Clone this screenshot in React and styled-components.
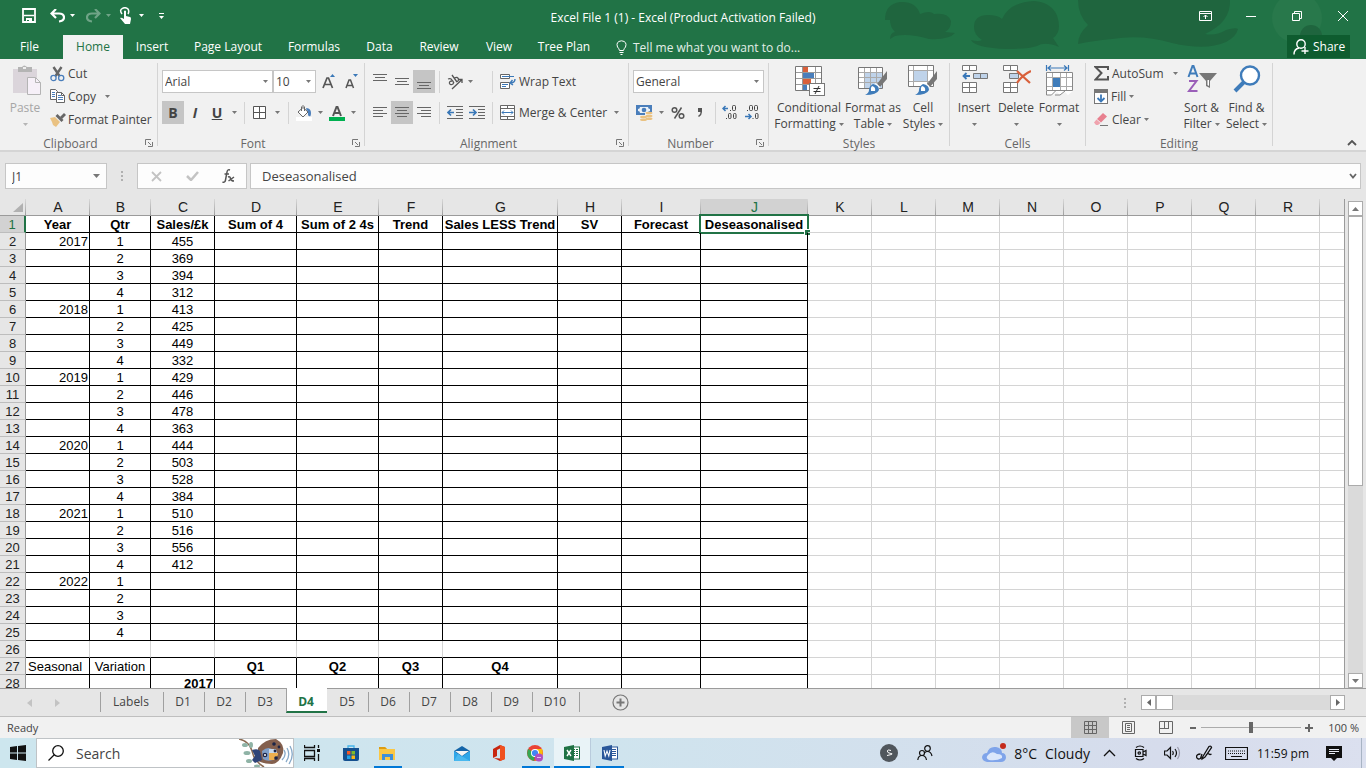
import React from "react";
import styled, { createGlobalStyle, css } from "styled-components";

const UI = `"Open Sans", "Noto Sans", sans-serif`;
const GREEN = "#217346";

const Global = createGlobalStyle`
  *, *::before, *::after { box-sizing: border-box; }
  html, body { margin: 0; padding: 0; }
  body { background: #e6e6e6; overflow: hidden; font-family: ${UI}; font-size: 12px; color: #444; }
  button, input, select { font: inherit; color: inherit; margin: 0; padding: 0; border: 0; background: none; border-radius: 0; }
  svg { display: block; flex: none; }
`;

/* ---------- shell ---------- */
const Shell = styled.div`
  display: flex;
  flex-direction: column;
  height: 100vh;
  min-width: 1280px;
`;

const Banner = styled.header`
  position: relative;
  background: ${GREEN};
  color: #fff;
`;
const Doodle = styled.svg`
  position: absolute;
  top: 0;
  right: 0;
`;
const TitleBar = styled.div`
  position: relative;
  display: grid;
  grid-template-columns: 1fr auto 1fr;
  align-items: center;
  height: 35px;
`;
const QuickBar = styled.div`
  display: flex;
  align-items: center;
  gap: 4px;
  padding: 0 0 4px 21px;
`;
const QuickButton = styled.button`
  display: flex;
  align-items: center;
  gap: 5px;
  height: 24px;
  margin-right: ${(p) => p.$after || 0}px;
  opacity: ${(p) => (p.disabled ? 0.35 : 1)};
`;
const Title = styled.h1`
  margin: 0;
  font-size: 12px;
  line-height: 16px;
  font-weight: 400;
`;
const WindowButtons = styled.div`
  display: flex;
  justify-content: flex-end;
  padding: 0 0 4px;
`;
const WindowButton = styled.button`
  display: flex;
  align-items: center;
  justify-content: center;
  width: 46px;
  height: 30px;
`;
const TabBar = styled.nav`
  position: relative;
  display: flex;
  height: 24px;
`;
const RibbonTab = styled.button`
  width: ${(p) => p.$w}px;
  line-height: 24px;
  text-align: center;
  ${(p) => p.$active && css`background: #f1f1f1; color: ${GREEN};`}
`;
const FileTab = styled(RibbonTab)`
  padding-right: 4px;
`;
const TellMe = styled.button`
  display: flex;
  align-items: center;
  gap: 6px;
  margin-left: 14px;
  color: #e3efe8;
`;
const Share = styled.button`
  display: flex;
  align-items: center;
  gap: 4px;
  height: 23px;
  width: 63px;
  padding-left: 6px;
  margin: 0 16px 0 auto;
  background: #0e5c2f;
`;

/* ---------- ribbon ---------- */
const Ribbon = styled.section`
  display: flex;
  height: 93px;
  background: #f1f1f1;
  border-bottom: 2px solid #d5d5d5;
`;
const Divider = styled.span`
  width: 1px;
  margin: 4px 0;
  background: #d4d4d4;
`;
const Group = styled.section`
  position: relative;
  display: flex;
  flex-direction: column;
  width: ${(p) => p.$w}px;
`;
const GroupBody = styled.div`
  display: flex;
  height: 76px;
  flex: none;
  padding: 3px 0 0 ${(p) => p.$left}px;
`;
const GroupName = styled.h2`
  margin: 0;
  padding-right: ${(p) => (p.$launcher ? 16 : 0)}px;
  font-size: 12px;
  font-weight: 400;
  line-height: 17px;
  text-align: center;
  color: #666;
`;
const Launcher = styled.button`
  position: absolute;
  right: 4px;
  bottom: 3px;
`;
const Rows = styled.div`
  display: flex;
  flex-direction: column;
  gap: ${(p) => p.$gap || 0}px;
  padding-top: ${(p) => p.$top || 0}px;
`;
const Row = styled.div`
  display: flex;
  height: 23px;
  align-items: center;
`;
const SmallButton = styled.button`
  display: flex;
  align-items: center;
  height: 23px;
  gap: ${(p) => p.$gap || 4}px;
  white-space: nowrap;
`;
const IconButton = styled.button`
  display: flex;
  align-items: center;
  justify-content: center;
  width: ${(p) => p.$w || 22}px;
  height: 23px;
  font-size: 14px;
  font-weight: 700;
  background: ${(p) => (p.$on ? "#c5c5c5" : "transparent")};
`;
const CaretButton = styled(IconButton)``;
const RowRule = styled.span`
  width: 1px;
  height: ${(p) => p.$h || 22}px;
  margin: 0 ${(p) => p.$r}px 0 ${(p) => p.$l}px;
  background: #d4d4d4;
`;
const BigButton = styled.button`
  display: flex;
  flex-direction: column;
  align-items: center;
  width: ${(p) => p.$w}px;
  padding-top: 3px;
  line-height: 16px;
  white-space: nowrap;
  color: ${(p) => (p.disabled ? "#a6a6a6" : "#444")};
`;
const BigIcon = styled.span`
  display: flex;
  height: 35px;
  align-items: flex-start;
`;
const BigLine = styled.span`
  display: flex;
  align-items: center;
  gap: 3px;
  height: 16px;
`;
const Picker = styled.span`
  position: relative;
  display: flex;
  align-items: center;
  width: ${(p) => p.$w}px;
  height: 23px;
  margin-right: ${(p) => p.$r || 0}px;
  background: #fff;
  border: 1px solid #c6c6c6;
  select {
    appearance: none;
    width: 100%;
    height: 21px;
    padding: 0 16px 0 2px;
  }
  svg {
    position: absolute;
    right: 4px;
    pointer-events: none;
  }
`;
const Collapse = styled.button`
  margin: auto 9px 4px auto;
`;

/* ---------- formula bar ---------- */
const FormulaRow = styled.section`
  display: flex;
  height: 47px;
  padding: 11px 5px 10px;
`;
const NameBox = styled.div`
  display: flex;
  align-items: center;
  justify-content: space-between;
  width: 102px;
  padding: 0 6px 0 6px;
  background: #fdfdfd;
  border: 1px solid #c6c6c6;
  input { width: 60px; }
`;
const FormulaDots = styled.span`
  display: flex;
  align-items: center;
  justify-content: center;
  width: 30px;
`;
const FormulaTools = styled.div`
  display: flex;
  align-items: center;
  width: 110px;
  margin-right: 3px;
  background: #fdfdfd;
  border: 1px solid #c6c6c6;
  button { display: flex; justify-content: center; width: 36px; }
`;
const FormulaField = styled.div`
  display: flex;
  flex: 1;
  align-items: center;
  padding: 0 3px 0 11px;
  background: #fdfdfd;
  border: 1px solid #c6c6c6;
  input { flex: 1; font-size: 13px; }
`;

/* ---------- sheet ---------- */
const SheetArea = styled.main`
  display: flex;
  flex: 1;
  min-height: 0;
  border-bottom: 1px solid #9b9b9b;
`;
const SheetPane = styled.div`
  flex: 1;
  min-width: 0;
  overflow: hidden;
  background: #fff;
  border-right: 1px solid #9b9b9b;
`;
const Grid = styled.table`
  width: 100%;
  table-layout: fixed;
  border-collapse: separate;
  border-spacing: 0;
  font-family: "Liberation Sans", Arial, sans-serif;
  font-size: 13px;
  color: #000;
`;
const ColumnHead = styled.th`
  height: 17px;
  padding: 0;
  font-size: 14px;
  font-weight: 400;
  line-height: 16px;
  color: ${(p) => (p.$on ? GREEN : "#222")};
  background:
    linear-gradient(#d8d8d8, #a0a0a0) right / 1px 100% no-repeat,
    ${(p) => (p.$on ? "#d2d2d2" : "#e6e6e6")};
  border-bottom: 1px solid ${(p) => (p.$on ? GREEN : "#9b9b9b")};
  &:last-child { background: #e6e6e6; }
  svg { margin: 0 3px 0 auto; }
`;
const RowHead = styled.th`
  height: 17px;
  padding: 2px 0 0;
  font-size: 13px;
  font-weight: 400;
  line-height: 14px;
  color: ${(p) => (p.$on ? GREEN : "#222")};
  background: ${(p) => (p.$on ? "#d2d2d2" : "#e6e6e6")};
  border-right: ${(p) => (p.$on ? `2px solid ${GREEN}` : "1px solid #9b9b9b")};
  border-bottom: 1px solid #bdbdbd;
`;
const Cell = styled.td`
  position: relative;
  height: 17px;
  padding: 2px ${(p) => (p.$align === "right" ? 1 : 0)}px 0 ${(p) => (p.$align === "left" ? 2 : 0)}px;
  line-height: 14px;
  white-space: nowrap;
  text-align: ${(p) => p.$align || "center"};
  font-weight: ${(p) => (p.$bold ? 700 : 400)};
  border-right: 1px solid ${(p) => (p.$right ? "#000" : "#d4d4d4")};
  border-bottom: 1px solid ${(p) => (p.$bottom ? "#000" : "#d4d4d4")};
  &:last-child { border-right: 0; }
`;
const Selection = styled.span`
  position: absolute;
  inset: -2px -2px -2px -2px;
  border: 2px solid ${GREEN};
  &::after {
    content: "";
    position: absolute;
    right: -3px;
    bottom: -3px;
    width: 5px;
    height: 5px;
    background: ${GREEN};
    box-shadow: -1px -1px 0 #fff;
  }
`;
const VScroll = styled.div`
  display: flex;
  flex-direction: column;
  width: 21px;
  padding: 2px 3px 0;
`;
const HScroll = styled.div`
  display: flex;
  width: 204px;
  height: 15px;
  margin: 0 21px 0 0;
`;
const Track = styled.div`
  display: flex;
  flex: 1;
  background: #dadada;
`;
const ScrollButton = styled.button`
  display: flex;
  align-items: center;
  justify-content: center;
  width: 15px;
  height: 15px;
  background: #fff;
  border: 1px solid #ababab;
`;
const Thumb = styled.div`
  width: ${(p) => p.$w};
  height: ${(p) => p.$h};
  background: #fff;
  border: 1px solid #ababab;
`;

const SheetTabs = styled.nav`
  display: flex;
  align-items: center;
  height: 28px;
  border-bottom: 1px solid #bfbfbf;
`;
const TabArrows = styled.div`
  display: flex;
  gap: 23px;
  width: 100px;
  padding-left: 27px;
`;
const TabList = styled.div`
  display: flex;
  align-items: flex-start;
  align-self: flex-start;
  margin-top: -1px;
`;
const SheetTab = styled.button`
  width: ${(p) => p.$w}px;
  height: 20px;
  margin-top: 4px;
  padding-right: 2px;
  line-height: 20px;
  text-align: center;
  border-left: 1px solid #a0a0a0;
  ${(p) => p.$on && css`
    height: 25px;
    margin-top: 0;
    padding-top: 4px;
    font-weight: 700;
    color: ${GREEN};
    background: #fff;
    border-bottom: 2px solid ${GREEN};
  `}
  ${(p) => p.$plain && css`border-left-color: transparent;`}
  ${(p) => p.$last && css`border-right: 1px solid #a0a0a0;`}
`;
const AddSheet = styled.button`
  margin-left: 32px;
`;
const Dots = styled.span`
  margin: 0 15px 0 auto;
`;

/* ---------- status bar ---------- */
const StatusBar = styled.footer`
  display: flex;
  align-items: center;
  height: 21px;
  padding: 0 7px;
  font-size: 11px;
  background: #f1f1f1;
`;
const ViewButton = styled.button`
  display: flex;
  align-items: center;
  justify-content: center;
  width: 38px;
  height: 21px;
  background: ${(p) => (p.$on ? "#c8c8c8" : "transparent")};
`;
const Views = styled.div`
  display: flex;
  margin-left: auto;
`;
const ZoomButton = styled.button`
  display: flex;
  justify-content: center;
  width: 16px;
`;
const ZoomRange = styled.input`
  appearance: none;
  width: 100px;
  height: 12px;
  background: linear-gradient(#ababab, #ababab) center / 100% 1px no-repeat;
  &::-webkit-slider-thumb {
    appearance: none;
    width: 4px;
    height: 11px;
    background: #666;
  }
`;
const ZoomText = styled.span`
  width: 42px;
  text-align: right;
`;

/* ---------- taskbar ---------- */
const Taskbar = styled.footer`
  display: flex;
  align-items: center;
  height: 30px;
  color: #111;
  background: linear-gradient(90deg, #cde6ee, #cfe4ee 45%, #d6dcec 85%, #dbe0ef);
`;
const TaskButton = styled.button`
  position: relative;
  display: flex;
  align-items: center;
  justify-content: center;
  width: ${(p) => p.$w || 37}px;
  height: 30px;
  background: ${(p) => (p.$on ? "#e9f3f7" : "transparent")};
  border-right: ${(p) => (p.$on ? "1px solid #b9cbdc" : "0")};
  ${(p) => p.$open && css`
    &::after {
      content: "";
      position: absolute;
      left: ${p.$on ? 0 : 5}px;
      right: ${p.$on ? 0 : 4}px;
      bottom: 0;
      height: 2px;
      background: #0078d7;
    }
  `}
`;
const TaskSearch = styled.label`
  display: flex;
  align-items: center;
  width: 258px;
  height: 30px;
  padding-left: 11px;
  background: #fff;
  border: 1px solid #bfc3c6;
  input {
    flex: 1;
    min-width: 0;
    padding-left: 12px;
    font-size: 14px;
    &::placeholder { color: #444; opacity: 1; }
  }
`;
const TaskApps = styled.div`
  display: flex;
  margin-left: ${(p) => p.$l || 0}px;
`;
const Tray = styled.div`
  display: flex;
  align-items: center;
  margin-left: auto;
`;
const TrayButton = styled.button`
  display: flex;
  align-items: center;
  justify-content: center;
  width: ${(p) => p.$w}px;
  height: 30px;
  white-space: nowrap;
`;
const WeatherButton = styled(TrayButton)`
  justify-content: flex-end;
  gap: 6px;
  padding-right: 7px;
  font-size: 14px;
`;
const Weather = styled.span`
  display: flex;
  gap: 8px;
`;
const Peek = styled.span`
  width: 5px;
  height: 30px;
  margin-left: 10px;
  border-left: 1px solid #a8b4c4;
`;

/* ---------- icons ---------- */
const Caret = ({ color = "#777" }) => (
  <svg width="5" height="3" viewBox="0 0 5 3"><path d="M0 0h5L2.500 3z" fill={color} /></svg>
);
const Svg = ({ w = 16, h = 16, children, ...rest }) => (
  <svg width={w} height={h} viewBox={`0 0 ${w} ${h}`} fill="none" aria-hidden="true" {...rest}>{children}</svg>
);
const LaunchIcon = () => (
  <Svg w={8} h={8} stroke="#777"><path d="M.5 6V.5H6M3 3l3 3M7.500 3v4.500H3" /></Svg>
);
const Lines = ({ rows }) => (
  <Svg w={14} h={15} stroke="#666">
    {rows.map(([x1, x2, y]) => <path key={y} d={`M${x1} ${y}.5H${x2}`} />)}
  </Svg>
);
const PasteIcon = () => (
  <Svg w={34} h={31}>
    <g transform="translate(4 0)">
      <rect x="1" y="4" width="24" height="24" fill="#dbd5db" />
      <path d="M6 2h4q2-3 5 0h5v5H6z" fill="#b4b4b4" /><rect x="11" y="2" width="3" height="2" fill="#eee" />
      <path d="M15.500 12.500h8l5 5v12h-13z" fill="#f6f0f8" stroke="#b4b4b4" /><path d="M23.500 12.500v5h5" stroke="#b4b4b4" />
    </g>
  </Svg>
);
const CutIcon = () => (
  <Svg w={15} h={16}>
    <path d="M3.500 1l6 9M11.500 1l-6 9" stroke="#666" strokeWidth="2.400" />
    <circle cx="3.500" cy="12" r="2.600" stroke="#4a7ebb" strokeWidth="1.300" /><circle cx="11.200" cy="12" r="2.600" stroke="#4a7ebb" strokeWidth="1.300" />
  </Svg>
);
const CopyIcon = () => (
  <Svg w={15} h={15}>
    <path d="M.5.500h5l2 2v8h-7z" fill="#fff" stroke="#666" /><path d="M2 3.500h3M2 5.500h3M2 7.500h3" stroke="#4a7ebb" />
    <path d="M6.500 3.500h5l3 3v7h-8z" fill="#fff" stroke="#666" /><path d="M8 6.500h3M8 8.500h5M8 10.500h5" stroke="#4a7ebb" />
    <path d="M11.500 3.500v3h3" stroke="#666" />
  </Svg>
);
const PainterIcon = () => (
  <Svg w={16} h={14}>
    <path d="M0 5l5-1 5 5-4 5-3-2-1-3z" fill="#eac282" />
    <path d="M5.500 3l2-2 6 6-2 2z" fill="#666" /><path d="M10 4l4-4 2 2-4 4z" fill="#666" />
  </Svg>
);
const FontSizeIcon = ({ up }) => (
  <Svg w={14} h={16}>
    {up
      ? <><path d="M1 14L5 4h1.500l4 10M2.500 10.500h6.500" stroke="#555" strokeWidth="1.700" /><path d="M8 3h5L10.500 0z" fill="#3a78b8" /></>
      : <><path d="M1 14l3-8h1.500l3 8M2 11.500h5" stroke="#555" strokeWidth="1.500" /><path d="M8 0h5l-2.500 3z" fill="#3a78b8" /></>}
  </Svg>
);
const BorderIcon = () => (
  <Svg w={13} h={13}><path d="M.5.500h12v12H.5zM6.500 0v13M0 6.500h13" stroke="#555" fill="#fff" /></Svg>
);
const FillIcon = () => (
  <Svg w={16} h={16}>
    <path d="M10.500 3q6 1 4 8-1.500 1-2.500-1 .5-4-2-6z" fill="#4a7ebb" />
    <rect x="0" y="12" width="16" height="4" fill="#fff" />
    <path d="M2 7l5-4.500L12 7l-5 5z" fill="#fff" stroke="#666" /><path d="M5.500 6V2q1.500-3 3 0v4" stroke="#666" />
  </Svg>
);
const FontColorIcon = () => (
  <Svg w={16} h={16}>
    <path d="M4 11L7.500 2h1l3.500 9M5.500 8h5" stroke="#555" strokeWidth="2" /><rect x="0" y="12" width="16" height="4" fill="#00b050" />
  </Svg>
);
const OrientIcon = () => (
  <Svg w={16} h={16} stroke="#555" strokeWidth="1.300">
    <path d="M1 5q3-1 4 1l2 3M5 7q-3 0-2.500 2.500 1 2 3.500.5 1-1 0-3M5 1l5 7M7.500 4q3-1.500 4 1 0 3-2.500 2.500" />
    <path d="M5 15L15 5.500M11.500 5.500H15V9" />
  </Svg>
);
const IndentIcon = ({ right }) => (
  <Svg w={16} h={13}>
    <path d="M0 .5h16M9 3.500h7M9 6.500h7M9 9.500h7M0 12.500h16" stroke="#666" />
    <path d={right ? "M0 6.500h6M4 3.500l3 3-3 3" : "M7 6.500H1M4 3.500l-3 3 3 3"} stroke="#3a78b8" strokeWidth="1.700" />
  </Svg>
);
const WrapIcon = () => (
  <Svg w={16} h={15}>
    <path d="M.5.500h9v4h-9zM.5 8.500h9v6h-9z" stroke="#666" fill="#fff" /><path d="M2 2.500h12M2 10.500h6M2 12.500h4" stroke="#3a78b8" />
    <path d="M15 5q0 4-5 4M12.500 6L10 9l3 2" stroke="#3a78b8" strokeWidth="1.400" />
  </Svg>
);
const MergeIcon = () => (
  <Svg w={15} h={15}>
    <path d="M.5.500h14v14H.5zM0 3.500h15M0 11.500h15M7.500 0v3M7.500 12v3" stroke="#666" fill="#fff" />
    <path d="M2 7.500h11M4 5.500l-2 2 2 2M11 5.500l2 2-2 2" stroke="#3a78b8" />
  </Svg>
);
const MoneyIcon = () => (
  <Svg w={17} h={16}>
    <rect x="0" y="0" width="16" height="10" fill="#4a7ebb" />
    <path d="M2 4q2 0 2-2h8q0 2 2 2v2q-2 0-2 2H4q0-2-2-2z" fill="#eaf1f8" />
    <circle cx="8" cy="5" r="2.300" fill="#4a7ebb" />
    <path d="M9 7h8v9H9z" fill="#f1f1f1" />
    <ellipse cx="13" cy="8" rx="3.500" ry="1.300" fill="#eac282" /><ellipse cx="13" cy="11" rx="3.500" ry="1.300" fill="#eac282" />
    <ellipse cx="13" cy="13.800" rx="3.500" ry="1.200" fill="#eac282" /><ellipse cx="7.500" cy="12" rx="3.500" ry="1.200" fill="#eac282" />
    <ellipse cx="7.500" cy="14.700" rx="3.500" ry="1.300" fill="#eac282" />
  </Svg>
);
const DecimalIcon = ({ more }) => (
  <Svg w={16} h={15} stroke="#444">
    {more ? <>
      <path d="M6 3.500H1M3.500 1L1 3.500 3.500 6" stroke="#3a78b8" strokeWidth="1.500" /><path d="M8 5.500h1M4 13.500h1" />
      <rect x="10.500" y=".5" width="3" height="5" rx="1" /><rect x="6.500" y="8.500" width="2.500" height="5" rx="1" /><rect x="11.500" y="8.500" width="2.500" height="5" rx="1" />
    </> : <>
      <path d="M1 11.500h6M4.500 9L7 11.500 4.500 14" stroke="#3a78b8" strokeWidth="1.500" /><path d="M3 5.500h1M8.500 13.500h1" />
      <rect x="5.500" y=".5" width="3" height="5" rx="1" /><rect x="10.500" y=".5" width="3" height="5" rx="1" /><rect x="11.500" y="8.500" width="2.500" height="5" rx="1" />
    </>}
  </Svg>
);
const ConditionalIcon = () => (
  <Svg w={31} h={31}>
    <rect x="1" y="1" width="27" height="24" fill="#fff" />
    <path d="M9 1h5v6H9zM9 14h8v5H9z" fill="#d9603b" /><path d="M9 8h11v5H9zM9 20h4v5H9z" fill="#4a7ebb" />
    <path d="M1 7.500h27M1 13.500h27M1 19.500h27M8.500 1v24M21.500 1v24" stroke="#999" />
    <path d="M1.500 1.500h26v24h-26z" stroke="#777" />
    <rect x="15.500" y="18.500" width="15" height="12" fill="#fff" stroke="#777" />
    <path d="M19.500 23.500h7M19.500 26.500h7M25 21l-4 8" stroke="#333" />
  </Svg>
);
const BrushShape = () => (
  <>
    <path d="M29 6v8l-7 8-3-3z" fill="#777" /><path d="M18 18l4 4-2 3-5-5z" fill="#fff" />
    <path d="M15 19q6 1 6 6-2 5-14 5 4-2 4-5 0-4 4-6z" fill="#3f7cba" /><path d="M14 21q4 1 3 5h-4q-1-3 1-5z" fill="#fff" />
  </>
);
const FormatTableIcon = () => (
  <Svg w={30} h={31}>
    <path d="M.5 2.500h24v21H.5z" fill="#fff" /><path d="M6 8h18v15H6z" fill="#bfd3ea" />
    <path d="M.5 7.500h24M.5 12.500h24M.5 17.500h24M6.500 3v20M12.500 3v20M18.500 3v20" stroke="#aaa" /><path d="M.5 2.500h24v21H.5z" stroke="#777" />
    <BrushShape />
  </Svg>
);
const CellStyleIcon = () => (
  <Svg w={30} h={31}>
    <path d="M.5.500h25v21H.5z" fill="#fff" /><path d="M.5 5.500h25M.5 16.500h25M5.500 0v21M19.500 0v21" stroke="#aaa" />
    <path d="M6 6h13v10H6z" fill="#bfd3ea" /><path d="M.5.500h25v21H.5z" stroke="#777" /><BrushShape />
  </Svg>
);
const InsertIcon = () => (
  <Svg w={28} h={29}>
    <g fill="#fff" stroke="#777"><path d="M2.500.500h14v5h-14zM9.500 0v6M2.500 17.500h14v10h-14zM9.500 17v11M2 22.500h15" /></g>
    <path d="M13.500 8.500h14v5h-14zM20.500 8v6" fill="#bfd3ea" stroke="#777" />
    <path d="M10 11H4M6.500 8L3.500 11l3 3" stroke="#3a78b8" strokeWidth="1.800" />
  </Svg>
);
const DeleteIcon = () => (
  <Svg w={30} h={29}>
    <g fill="#fff" stroke="#777"><path d="M2.500.500h14v5h-14zM9.500 0v6M2.500 17.500h14v10h-14zM9.500 17v11M2 22.500h15" /></g>
    <path d="M8.500 8.500h9v5h-9z" fill="#bfd3ea" stroke="#777" />
    <path d="M16 6l13 12M30 6Q21 10 16 18" stroke="#d9603b" strokeWidth="2.200" />
  </Svg>
);
const FormatIcon = () => (
  <Svg w={29} h={32}>
    <path d="M1.500 0v6M23.500 0v6M3 3h19M6 .5L3 3l3 2.500M19 .500L22 3l-3 2.500" stroke="#3a78b8" strokeWidth="1.200" />
    <path d="M1 7h27v19l-5 4-3-3-5 3-3-3-4 3-7 0z" fill="#fff" />
    <path d="M1 12.500h27M1 21.500h27M7.500 7v19M15.500 7v19M21.500 7v19" stroke="#aaa" /><path d="M8 13h7v9H8z" fill="#3f7cba" />
    <path d="M1.500 7.500h26v18h-26zM1.500 26v4h5l4-4M10 30h5l5-4" stroke="#888" />
  </Svg>
);
const SigmaIcon = () => (
  <Svg w={15} h={15}><path d="M14 4V1H1.500l6 6-6 6.500H14V10" stroke="#555" strokeWidth="2" /></Svg>
);
const FillDownIcon = () => (
  <Svg w={14} h={15}><rect x=".5" y=".5" width="13" height="14" fill="#fff" stroke="#777" /><path d="M0 0h14v4H0z" fill="#777" /><path d="M7 5.500V13M3.500 9L7 12.500 10.500 9" stroke="#3a78b8" strokeWidth="1.800" /></Svg>
);
const ClearIcon = () => (
  <Svg w={15} h={14}><path d="M9 0l4 3.500-6 6L3 6z" fill="#e8808f" /><path d="M2.500 6.500L6.500 10 4 12H2L0 9.500z" fill="#f0a3ae" /><path d="M6 12.500h8" stroke="#777" /></Svg>
);
const SortIcon = () => (
  <Svg w={30} h={28}>
    <path d="M1.500 12L5.500 1h1l4 11M3 8.500h6" stroke="#3f7cba" strokeWidth="2" />
    <path d="M2 16h7.500L2 26h8.500" stroke="#9a5fb8" strokeWidth="2" />
    <path d="M12 8h18l-7 8v7l-4-2v-5z" fill="#777" /><path d="M20.500 15h1.500v6l-1.500-1z" fill="#fff" />
  </Svg>
);
const FindIcon = () => (
  <Svg w={28} h={28}><path d="M11 17L2 26" stroke="#3f7cba" strokeWidth="4" /><circle cx="17" cy="10.500" r="9" fill="#fff" stroke="#3f7cba" strokeWidth="2.400" /></Svg>
);
const BirdArt = () => (
  <Svg w={54} h={28}>
    <path d="M0 0q10 2 13 12 2 10 12 16" stroke="#8a6a52" strokeWidth="1.500" />
    <g fill="#8fb3a6"><ellipse cx="6" cy="6" rx="3" ry="2" /><ellipse cx="12" cy="6" rx="2" ry="3" /><ellipse cx="8" cy="14" rx="3.500" ry="2" /><ellipse cx="10" cy="22" rx="3" ry="2" /><ellipse cx="18" cy="27" rx="3" ry="1.500" /></g>
    <path d="M19 9Q26 0 37 0q9 5 7 14-4 11-11 11-8 0-14-3z" fill="#84604e" />
    <path d="M23 12q7-6 12 0l-1 9q-6 2-10-1z" fill="#7f9fc9" /><path d="M30 14h9v2l-4 5h-5z" fill="#efb04e" /><path d="M30 10h7l1 4h-8z" fill="#c9d9ea" />
    <g fill="#1c2547"><circle cx="35" cy="5" r="1.800" /><circle cx="40" cy="8" r="1.400" /><circle cx="26" cy="16" r="2.300" /><circle cx="36" cy="12" r="1.400" /><circle cx="37" cy="19" r="1.800" /></g>
    <circle cx="26" cy="16" r="1" fill="#fff" />
    <path d="M13 11q6-2 8 1l2 9-7 3-3-3 3-4z" fill="#2f4478" />
    <path d="M45 11q3 5-2 10M48 9q4 7-1 14M51 7q5 9-1 18" stroke="#86a9c9" strokeWidth="1.300" />
  </Svg>
);

/* ---------- data ---------- */
const COLS = [
  ["A", 64], ["B", 61], ["C", 64], ["D", 82], ["E", 82], ["F", 64], ["G", 115], ["H", 64], ["I", 79], ["J", 107],
  ["K", 64], ["L", 64], ["M", 64], ["N", 64], ["O", 64], ["P", 64], ["Q", 64], ["R", 64], ["", null],
];
const HEAD = ["Year", "Qtr", "Sales/£k", "Sum of 4", "Sum of 2 4s", "Trend", "Sales LESS Trend", "SV", "Forecast", "Deseasonalised"];
const SALES = [455, 369, 394, 312, 413, 425, 449, 332, 429, 446, 478, 363, 444, 503, 528, 384, 510, 516, 556, 412];

function cellAt(row, col) {
  if (row === 1) return { text: HEAD[col], bold: true };
  if (row <= 25) {
    const i = row - 2;
    if (col === 0 && i % 4 === 0) return { text: 2017 + i / 4, align: "right" };
    if (col === 1) return { text: (i % 4) + 1 };
    if (col === 2) return { text: SALES[i] };
    return {};
  }
  if (row === 27) {
    if (col === 0) return { text: "Seasonal", align: "left" };
    if (col === 1) return { text: "Variation" };
    if (col >= 3 && col <= 6) return { text: `Q${col - 2}`, bold: true };
  }
  if (row === 28 && col === 2) return { text: "2017", bold: true, align: "right" };
  return {};
}

const RIBBON_TABS = [["Insert", 58], ["Page Layout", 94], ["Formulas", 78], ["Data", 53], ["Review", 66], ["View", 54], ["Tree Plan", 76]];
const SHEETS = [["Labels", 63], ["D1", 41], ["D2", 41], ["D3", 41], ["D4", 41], ["D5", 41], ["D6", 41], ["D7", 41], ["D8", 41], ["D9", 41], ["D10", 48]];

/* ---------- parts ---------- */
function RibbonGroup({ name, w, left, launcher, children }) {
  return (
    <>
      <Group $w={w}>
        <GroupBody $left={left}>{children}</GroupBody>
        <GroupName $launcher={launcher}>{name}</GroupName>
        {launcher && <Launcher aria-label={`${name} settings`}><LaunchIcon /></Launcher>}
      </Group>
      <Divider />
    </>
  );
}

function Big({ w, icon, lines, caretBelow, disabled }) {
  const last = lines.length - 1;
  return (
    <BigButton $w={w} disabled={disabled}>
      <BigIcon>{icon}</BigIcon>
      {lines.map((t, i) => <BigLine key={t}>{t}{i === last && !caretBelow && <Caret />}</BigLine>)}
      {caretBelow && <BigLine><Caret color={disabled ? "#b5b5b5" : "#777"} /></BigLine>}
    </BigButton>
  );
}

function Sheet() {
  return (
    <Grid>
      <colgroup>
        <col style={{ width: 26 }} />
        {COLS.map(([n, w]) => <col key={n} style={w ? { width: w } : undefined} />)}
      </colgroup>
      <thead>
        <tr>
          <ColumnHead aria-label="Select all"><Svg w={10} h={9}><path d="M10 0v9H0z" fill="#b1b1b1" /></Svg></ColumnHead>
          {COLS.map(([n]) => <ColumnHead key={n} scope="col" $on={n === "J"}>{n}</ColumnHead>)}
        </tr>
      </thead>
      <tbody>
        {Array.from({ length: 28 }, (_, i) => i + 1).map((r) => (
          <tr key={r}>
            <RowHead scope="row" $on={r === 1}>{r}</RowHead>
            {COLS.map(([n], c) => {
              const { text, bold, align } = cellAt(r, c);
              return (
                <Cell key={n} $bold={bold} $align={align} $right={c < 10 && !(r === 26 && c < 6)} $bottom={c < 10}>
                  {text}
                  {r === 1 && n === "J" && <Selection />}
                </Cell>
              );
            })}
          </tr>
        ))}
      </tbody>
    </Grid>
  );
}

export default function App() {
  return (
    <Shell>
      <Global />
      <Banner>
        <Doodle width="526" height="59" viewBox="0 0 526 59" aria-hidden="true">
          <circle cx="457" cy="18" r="25" fill="#28784b" />
          <g fill="#1f653e">
            <path d="M45 20Q45 4 60 2q16-1 20 12 10-4 14 0 14-2 17 7 0 8-6 11l10 1q-6 7-26 6-20-6-34-3l-5 3q0-6 5-7-5-5-5-12z" />
            <path d="M134 27q0-12 14-12 10 0 14 4Q170 2 194 1q24 2 25 25 0 8-6 12l6 9q-14-6-22-1-8 3-30 3-32-1-36-9 8 2 11 0-8-5-8-13z" />
            <path d="M238 0h152q1 22-25 34 11 2 21-4 10-3 12-1-2 8-12 13-20 9-54 1-30-9-60-4-20 2-34 5 0-10 10-19-10-10-10-25z" />
            <circle cx="471" cy="36" r="11" />
          </g>
        </Doodle>
        <TitleBar>
          <QuickBar>
            <QuickButton aria-label="Save" $after={9}>
              <Svg w={16} h={15}><path d="M2 1h12v13H2z" stroke="#fff" strokeWidth="1.800" /><path d="M3 7.500h10" stroke="#fff" strokeWidth="1.500" /><path d="M5 10h6v4H8v-2H6v2H5z" fill="#fff" /></Svg>
            </QuickButton>
            <QuickButton aria-label="Undo" $after={7}>
              <Svg w={15} h={14}><path d="M6 0L1.500 4.500 6 9M2 4.500h7q5 0 5 4 0 3.500-5 4" stroke="#fff" strokeWidth="2.200" /></Svg><Caret color="#fff" />
            </QuickButton>
            <QuickButton aria-label="Redo" disabled $after={4}>
              <Svg w={15} h={14}><path d="M9 0l4.500 4.500L9 9M13 4.500H6q-5 0-5 4 0 3.500 5 4" stroke="#fff" strokeWidth="2.200" /></Svg><Caret color="#fff" />
            </QuickButton>
            <QuickButton aria-label="Touch mode" $after={11}>
              <Svg w={15} h={17}><path d="M3 7Q0 3 3.500 1.300q3-1.500 5.500.7 1.500 2.500 0 5" stroke="#fff" strokeWidth="1.500" /><path d="M5 4q1-1 2 0v5l4 1q1 0 1 2l-1 5H6l-5-6q1-1 4 1z" fill="#fff" /></Svg><Caret color="#fff" />
            </QuickButton>
            <QuickButton aria-label="Customize toolbar">
              <Svg w={5} h={6}><path d="M0 .5h5" stroke="#fff" /><path d="M0 3h5L2.500 6z" fill="#fff" /></Svg>
            </QuickButton>
          </QuickBar>
          <Title>Excel File 1 (1) - Excel (Product Activation Failed)</Title>
          <WindowButtons>
            <WindowButton aria-label="Ribbon options"><Svg w={13} h={10} stroke="#fff"><path d="M.5.500h12v9H.5zM0 2.500h13M6.500 8V4M4.500 6l2-2 2 2" /></Svg></WindowButton>
            <WindowButton aria-label="Minimize"><Svg w={10} h={10} stroke="#fff"><path d="M0 5.500h10" /></Svg></WindowButton>
            <WindowButton aria-label="Restore"><Svg w={10} h={10} stroke="#fff"><path d="M.5 2.500h7v7h-7zM2.500 2V.500h7v7H8" /></Svg></WindowButton>
            <WindowButton aria-label="Close"><Svg w={10} h={10} stroke="#fff"><path d="M0 0l10 10M10 0L0 10" /></Svg></WindowButton>
          </WindowButtons>
        </TitleBar>
        <TabBar>
          <FileTab $w={63}>File</FileTab>
          <RibbonTab $w={60} $active>Home</RibbonTab>
          {RIBBON_TABS.map(([t, w]) => <RibbonTab key={t} $w={w}>{t}</RibbonTab>)}
          <TellMe>
            <Svg w={11} h={15} stroke="#fff"><path d="M3.500 10.500Q3 8.500 1.500 7-.5 1.500 5.500.800q6 .7 4 6.200-1.500 1.500-2 3.500zM3.500 12.500h4M4.500 14.500h2" /></Svg>
            Tell me what you want to do...
          </TellMe>
          <Share>
            <Svg w={16} h={16} stroke="#fff" strokeWidth="1.400"><circle cx="8" cy="5" r="4.200" /><path d="M1 15.500Q1 10 6 9M12 8v7M8.500 12h7" /></Svg>
            Share
          </Share>
        </TabBar>
      </Banner>

      <Ribbon>
        <RibbonGroup name="Clipboard" w={157} left={0} launcher>
          <Big w={50} icon={<PasteIcon />} lines={["Paste"]} caretBelow disabled />
          <Rows>
            <SmallButton $gap={3}><CutIcon />Cut</SmallButton>
            <SmallButton $gap={3}><CopyIcon />Copy<Svg w={3} h={3} /><Caret /></SmallButton>
            <SmallButton $gap={2}><PainterIcon />Format Painter</SmallButton>
          </Rows>
        </RibbonGroup>

        <RibbonGroup name="Font" w={206} left={4} launcher>
          <Rows $top={8} $gap={8}>
            <Row>
              <Picker $w={111}><select aria-label="Font" defaultValue="Arial"><option>Arial</option></select><Caret /></Picker>
              <Picker $w={43} $r={1}><select aria-label="Font size" defaultValue="10"><option>10</option></select><Caret /></Picker>
              <IconButton aria-label="Grow font" $w={24}><FontSizeIcon up /></IconButton>
              <IconButton aria-label="Shrink font"><FontSizeIcon /></IconButton>
            </Row>
            <Row>
              <IconButton $on>B</IconButton>
              <IconButton><i>I</i></IconButton>
              <IconButton><u>U</u></IconButton>
              <CaretButton aria-label="Underline styles" $w={12}><Caret /></CaretButton>
              <RowRule $l={4} $r={2} />
              <IconButton aria-label="Borders" $w={24}><BorderIcon /></IconButton>
              <CaretButton aria-label="Border styles" $w={12}><Caret /></CaretButton>
              <RowRule $l={5} $r={5} />
              <IconButton aria-label="Fill colour" $w={20}><FillIcon /></IconButton>
              <CaretButton aria-label="Fill colours" $w={12}><Caret /></CaretButton>
              <IconButton aria-label="Font colour"><FontColorIcon /></IconButton>
              <CaretButton aria-label="Font colours" $w={10}><Caret /></CaretButton>
            </Row>
          </Rows>
        </RibbonGroup>

        <RibbonGroup name="Alignment" w={263} left={4} launcher>
          <Rows $top={8} $gap={8}>
            <Row>
              <IconButton aria-label="Top align"><Lines rows={[[0, 14, 0], [2, 12, 3], [0, 14, 6]]} /></IconButton>
              <IconButton aria-label="Middle align"><Lines rows={[[0, 14, 4], [2, 12, 7], [0, 14, 10]]} /></IconButton>
              <IconButton aria-label="Bottom align" $on><Lines rows={[[0, 14, 8], [2, 12, 11], [0, 14, 14]]} /></IconButton>
              <RowRule $l={4} $r={4} />
              <IconButton aria-label="Orientation"><OrientIcon /></IconButton>
              <CaretButton aria-label="Orientations" $w={8}><Caret /></CaretButton>
              <RowRule $l={18} $r={7} />
              <SmallButton $gap={3}><WrapIcon />Wrap Text</SmallButton>
            </Row>
            <Row>
              <IconButton aria-label="Align left"><Lines rows={[[0, 14, 2], [0, 10, 5], [0, 14, 8], [0, 10, 11]]} /></IconButton>
              <IconButton aria-label="Centre" $on><Lines rows={[[0, 14, 2], [2, 12, 5], [0, 14, 8], [2, 12, 11]]} /></IconButton>
              <IconButton aria-label="Align right"><Lines rows={[[0, 14, 2], [4, 14, 5], [0, 14, 8], [4, 14, 11]]} /></IconButton>
              <RowRule $l={4} $r={4} />
              <IconButton aria-label="Decrease indent"><IndentIcon /></IconButton>
              <IconButton aria-label="Increase indent"><IndentIcon right /></IconButton>
              <RowRule $l={4} $r={7} />
              <SmallButton><MergeIcon />Merge &amp; Center</SmallButton>
              <CaretButton aria-label="Merge options" $w={18}><Caret /></CaretButton>
            </Row>
          </Rows>
        </RibbonGroup>

        <RibbonGroup name="Number" w={139} left={4} launcher>
          <Rows $top={8} $gap={8}>
            <Row><Picker $w={131}><select aria-label="Number format" defaultValue="General"><option>General</option></select><Caret /></Picker></Row>
            <Row>
              <IconButton aria-label="Accounting format"><MoneyIcon /></IconButton>
              <CaretButton aria-label="Currencies" $w={12}><Caret /></CaretButton>
              <IconButton aria-label="Percent">
                <Svg w={14} h={14} stroke="#555" strokeWidth="1.500"><circle cx="3.500" cy="4" r="2.300" /><circle cx="10.500" cy="10" r="2.300" /><path d="M10.500 1.500l-7 11" /></Svg>
              </IconButton>
              <IconButton aria-label="Comma style">
                <Svg w={6} h={9}><path d="M1 8q3-2 2.500-4H1V0h4v4Q5 7 2 9z" fill="#555" /></Svg>
              </IconButton>
              <RowRule $l={4} $r={3} />
              <IconButton aria-label="Increase decimal"><DecimalIcon more /></IconButton>
              <IconButton aria-label="Decrease decimal"><DecimalIcon /></IconButton>
            </Row>
          </Rows>
        </RibbonGroup>

        <RibbonGroup name="Styles" w={180} left={3}>
          <Big w={74} icon={<ConditionalIcon />} lines={["Conditional", "Formatting"]} />
          <Big w={54} icon={<FormatTableIcon />} lines={["Format as", "Table"]} />
          <Big w={46} icon={<CellStyleIcon />} lines={["Cell", "Styles"]} />
        </RibbonGroup>

        <RibbonGroup name="Cells" w={135} left={3}>
          <Big w={42} icon={<InsertIcon />} lines={["Insert"]} caretBelow />
          <Big w={42} icon={<DeleteIcon />} lines={["Delete"]} caretBelow />
          <Big w={44} icon={<FormatIcon />} lines={["Format"]} caretBelow />
        </RibbonGroup>

        <RibbonGroup name="Editing" w={186} left={8}>
          <Rows>
            <SmallButton $gap={3}><SigmaIcon />AutoSum<Svg w={3} h={3} /><Caret /></SmallButton>
            <SmallButton $gap={3}><FillDownIcon />Fill<Caret /></SmallButton>
            <SmallButton $gap={3}><ClearIcon />Clear<Caret /></SmallButton>
          </Rows>
          <Big w={48} icon={<SortIcon />} lines={["Sort &", "Filter"]} />
          <Big w={42} icon={<FindIcon />} lines={["Find &", "Select"]} />
        </RibbonGroup>
        <Collapse aria-label="Collapse ribbon"><Svg w={10} h={6} stroke="#555" strokeWidth="1.800"><path d="M1 5l4-4 4 4" /></Svg></Collapse>
      </Ribbon>

      <FormulaRow>
        <NameBox><input aria-label="Name box" defaultValue="J1" /><Svg w={7} h={4}><path d="M0 0h7L3.500 4z" fill="#777" /></Svg></NameBox>
        <FormulaDots><Svg w={2} h={10}><path d="M0 0h2v2H0zM0 4h2v2H0zM0 8h2v2H0z" fill="#b0b0b0" /></Svg></FormulaDots>
        <FormulaTools>
          <button aria-label="Cancel"><Svg w={11} h={11} stroke="#c3c3c3" strokeWidth="1.800"><path d="M1 1l9 9M10 1l-9 9" /></Svg></button>
          <button aria-label="Enter"><Svg w={13} h={10} stroke="#c3c3c3" strokeWidth="2.500"><path d="M1 5l4 4 7-8" /></Svg></button>
          <button aria-label="Insert function"><Svg w={13} h={14} stroke="#555" strokeWidth="1.500"><path d="M8 1Q5.500 0 5 3L3.500 11Q3 14 .5 13M2.500 5H7M6 8q2-1 2.500 1.500T12 12M12 8l-5.500 4" /></Svg></button>
        </FormulaTools>
        <FormulaField><input aria-label="Formula bar" defaultValue="Deseasonalised" /><Svg w={8} h={6} stroke="#666" strokeWidth="1.800"><path d="M1 1l3 3.500L7 1" /></Svg></FormulaField>
      </FormulaRow>

      <SheetArea>
        <SheetPane><Sheet /></SheetPane>
        <VScroll>
          <ScrollButton aria-label="Scroll up"><Svg w={7} h={4}><path d="M0 4h7L3.500 0z" fill="#777" /></Svg></ScrollButton>
          <Track><Thumb $w="100%" $h="59%" /></Track>
          <ScrollButton aria-label="Scroll down"><Svg w={7} h={4}><path d="M0 0h7L3.500 4z" fill="#777" /></Svg></ScrollButton>
        </VScroll>
      </SheetArea>

      <SheetTabs>
        <TabArrows>
          <Svg w={5} h={8}><path d="M5 0v8L0 4z" fill="#c3c3c3" /></Svg>
          <Svg w={5} h={8}><path d="M0 0v8l5-4z" fill="#c3c3c3" /></Svg>
        </TabArrows>
        <TabList>
          {SHEETS.map(([t, w]) => <SheetTab key={t} $w={w} $on={t === "D4"} $plain={t === "D5"} $last={t === "D10"}>{t}</SheetTab>)}
        </TabList>
        <AddSheet aria-label="New sheet"><Svg w={17} h={17} stroke="#777"><circle cx="8.500" cy="8.500" r="7.500" strokeWidth="1.200" /><path d="M8.500 4.500v8M4.500 8.500h8" strokeWidth="2" /></Svg></AddSheet>
        <Dots><Svg w={2} h={10}><path d="M0 0h2v2H0zM0 4h2v2H0zM0 8h2v2H0z" fill="#b0b0b0" /></Svg></Dots>
        <HScroll>
          <ScrollButton aria-label="Scroll left"><Svg w={4} h={7}><path d="M4 0v7L0 3.500z" fill="#666" /></Svg></ScrollButton>
          <Track><Thumb $w="17px" $h="15px" /></Track>
          <ScrollButton aria-label="Scroll right"><Svg w={4} h={7}><path d="M0 0v7l4-3.500z" fill="#666" /></Svg></ScrollButton>
        </HScroll>
      </SheetTabs>

      <StatusBar>
        Ready
        <Views>
          <ViewButton aria-label="Normal view" $on><Svg w={13} h={13} stroke="#666"><path d="M.5.500h12v12H.5zM4.500 0v13M8.500 0v13M0 4.500h13M0 8.500h13" /></Svg></ViewButton>
          <ViewButton aria-label="Page layout view"><Svg w={13} h={13} stroke="#666"><path d="M.5.500h12v12H.5zM3.500 2.500h6v8h-6zM5 4.500h3M5 6.500h3M5 8.500h3" /></Svg></ViewButton>
          <ViewButton aria-label="Page break view"><Svg w={14} h={13} stroke="#666"><path d="M.5.500h13v12H.5zM5.500 1v6.500M9.500 0v7.500M0 7.500h10" /></Svg></ViewButton>
        </Views>
        <ZoomButton aria-label="Zoom out"><Svg w={6} h={2}><path d="M0 0h6v2H0z" fill="#666" /></Svg></ZoomButton>
        <ZoomRange type="range" aria-label="Zoom" min="0" max="100" defaultValue="50" />
        <ZoomButton aria-label="Zoom in"><Svg w={8} h={8}><path d="M0 3h3V0h2v3h3v2H5v3H3V5H0z" fill="#666" /></Svg></ZoomButton>
        <ZoomText>100 %</ZoomText>
      </StatusBar>

      <Taskbar>
        <TaskButton $w={36} aria-label="Start"><Svg w={16} h={16}><path d="M0 2l7-1v6.500H0zM8 1l8-1v7.500H8zM0 8.500h7V15l-7-1zM8 8.500h8V16l-8-1z" fill="#111" /></Svg></TaskButton>
        <TaskSearch>
          <Svg w={16} h={16} stroke="#111" strokeWidth="1.300"><circle cx="10" cy="6" r="5.300" /><path d="M6.500 9.500L.5 15.500" /></Svg>
          <input aria-label="Search" placeholder="Search" />
          <BirdArt />
        </TaskSearch>
        <TaskButton $w={36} aria-label="Task view"><Svg w={16} h={16} stroke="#111" strokeWidth="1.300"><path d="M.5 0v2.500h10V0M.5 5.500h10v6H.5zM.5 16v-2.500h10V16M14.500 0v3M14.500 9v7" /><path d="M13 4h3v3h-3z" fill="#111" stroke="none" /></Svg></TaskButton>
        <TaskApps $l={2}>
          <TaskButton aria-label="Store"><Svg w={16} h={17}><path d="M5 3V1h6v2" stroke="#45b4ea" strokeWidth="1.300" /><path d="M0 3h16v11q0 2-2 2H2q-2 0-2-2z" fill="#15508f" /><path d="M4 6h3.500v3.500H4z" fill="#f05a28" /><path d="M8.500 6H12v3.500H8.500z" fill="#80bb2a" /><path d="M4 10.500h3.500V14H4z" fill="#20a4e8" /><path d="M8.500 10.500H12V14H8.500z" fill="#fcb913" /></Svg></TaskButton>
          <TaskButton aria-label="Files" $open><Svg w={17} h={15}><path d="M0 1h6l2 2h8v11H0z" fill="#fbc744" /><path d="M0 1h6l2 2H0z" fill="#dd9c12" /><path d="M3 8h11v6h-3v-3H6v3H3z" fill="#3f8fd9" /></Svg></TaskButton>
        </TaskApps>
        <TaskApps $l={37}>
          <TaskButton aria-label="Mail"><Svg w={16} h={15}><path d="M0 5l8-5 8 5v10H0z" fill="#1565a8" /><path d="M1 5h14l-7 5z" fill="#f4f4f4" /><path d="M0 5l8 5.500L16 5v10H0z" fill="#2ea6e8" /><path d="M16 15L4 8l-4 7z" fill="#5cc5f3" opacity=".6" /></Svg></TaskButton>
          <TaskButton aria-label="Office"><Svg w={12} h={16}><path d="M0 4l7-4 5 2v12l-5 2-6-3 6 .5V3.500L4 5v6l-4 2z" fill="#c8260f" /><path d="M7 0l5 2v12l-5 2z" fill="#f0511f" /></Svg></TaskButton>
          <TaskButton aria-label="Browser" $open><Svg w={17} h={17}><circle cx="8" cy="8" r="8" fill="#ea4335" /><path d="M8 8L1 4q-3 9 6 12z" fill="#34a853" /><path d="M8 4h7q3 8-7 12l3-6z" fill="#fbbc05" /><circle cx="8" cy="8" r="4" fill="#fff" /><circle cx="8" cy="8" r="3.100" fill="#4285f4" /><circle cx="12" cy="12.500" r="4" fill="#b04fc0" /><path d="M10 12.500h4" stroke="#e7b8ee" /></Svg></TaskButton>
          <TaskButton aria-label="Excel" $open $on><Svg w={16} h={16}><rect x="7.500" y="2" width="8" height="12" fill="#fff" stroke="#1f7244" /><path d="M9 4.500h2M12 4.500h2M9 6.500h2M12 6.500h2M9 8.500h2M12 8.500h2M9 10.500h2M12 10.500h2" stroke="#1f7244" /><path d="M0 2l10-2v16L0 14z" fill="#1f7244" /><path d="M3 5l4 6M7 5l-4 6" stroke="#fff" strokeWidth="1.400" /></Svg></TaskButton>
          <TaskButton aria-label="Word" $open><Svg w={16} h={16}><rect x="7.500" y="2" width="8" height="12" fill="#fff" stroke="#2a579a" /><path d="M10 4.500h4M10 6.500h4M10 8.500h4M10 10.500h4" stroke="#2a579a" /><path d="M0 2l10-2v16L0 14z" fill="#2a579a" /><path d="M2 5l1.200 6L5 6l1.800 5L8 5" stroke="#fff" strokeWidth="1.100" /></Svg></TaskButton>
        </TaskApps>
        <Tray>
          <TrayButton $w={36} aria-label="Account"><Svg w={18} h={18}><circle cx="9" cy="9" r="9" fill="#50565c" /><path d="M11 6.500Q7.500 5 7.300 7t3.600 2.500T7 11.500" stroke="#fff" /></Svg></TrayButton>
          <TrayButton $w={36} aria-label="People"><Svg w={16} h={16} stroke="#111" strokeWidth="1.200"><circle cx="10.500" cy="3.500" r="2.800" /><path d="M15 11q-1-4.500-4.500-4.500-2 0-3 1.500" /><circle cx="5" cy="8" r="2.500" /><path d="M.8 15q.5-4.500 4.200-4.500T9.500 15" /></Svg></TrayButton>
          <WeatherButton $w={154}>
            <Svg w={26} h={20}><path d="M5 19q-5-1-5-5 1-4 5-4 2-7 9-6 6 1 6 6 4 0 4 5-1 4-5 4z" fill="#7fa4ea" /><path d="M7 17q-4-2-1-5 4-5 9-1 6 0 5 4-5 3-13 2z" fill="#dbe7fb" /><circle cx="21" cy="3" r="3" fill="#c42b1c" /></Svg>
            <Weather><span>8°C</span><span>Cloudy</span></Weather>
          </WeatherButton>
          <TrayButton $w={24} aria-label="Hidden icons"><Svg w={13} h={8} stroke="#111" strokeWidth="1.300"><path d="M1 7l5.500-5.500L12 7" /></Svg></TrayButton>
          <TrayButton $w={38} aria-label="Camera"><Svg w={13} h={16} stroke="#111" strokeWidth="1.200"><path d="M1.500 4.500h7.500v7H1.500zM9 7l3-1.500v5L9 9M2 2.500q4-3 8 0M2 13.500q4 3 8 0" /><circle cx="5.300" cy="8" r="1.200" /></Svg></TrayButton>
          <TrayButton $w={26} aria-label="Volume"><Svg w={17} h={14} stroke="#111" strokeWidth="1.200"><path d="M.5 5v4h2.500l3.500 3.500v-11L3 5zM8.500 5q1.500 2 0 4M11 3q3 4 0 8" /><path d="M13.500 1q4 6 0 12" stroke="#99a" /></Svg></TrayButton>
          <TrayButton $w={38} aria-label="Pen"><Svg w={17} h={16} stroke="#111" strokeWidth="1.300"><path d="M6 13L13 1.500q2-1 2.500 1L9 12l-3 2zM4.500 9q-4 0-4 3 1 3 4 1.500L6 9M10 10q2-2 3-1t2.500 0" /></Svg></TrayButton>
          <TrayButton $w={26} aria-label="Keyboard"><Svg w={23} h={13} stroke="#111"><path d="M.5.500h22v12H.5z" strokeWidth="1.200" /><path d="M3 4h17M3 6.500h17" strokeDasharray="1 1" /><path d="M6 9.500h11" /></Svg></TrayButton>
          <TrayButton $w={68}>11:59 pm</TrayButton>
          <TrayButton $w={34} aria-label="Notifications"><Svg w={16} h={16}><path d="M0 1h16v12h-5l-3 3-3-3H0z" fill="#111" /><path d="M3 4.500h10M3 6.500h10M3 8.500h6" stroke="#e8ecf4" /></Svg></TrayButton>
          <Peek />
        </Tray>
      </Taskbar>
    </Shell>
  );
}
